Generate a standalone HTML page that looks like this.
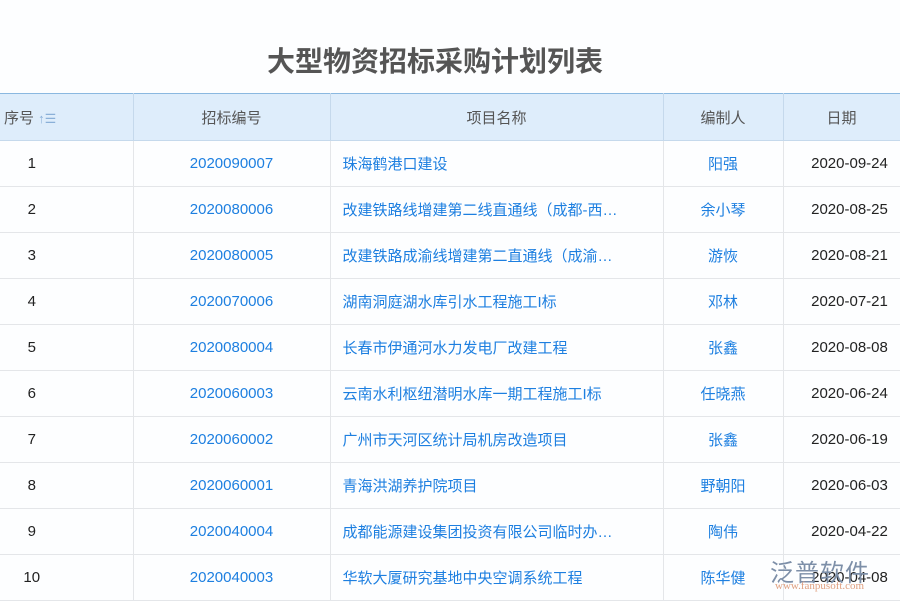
<!DOCTYPE html><html><head><meta charset="utf-8"><style>
body{margin:0;width:900px;height:600px;background:#fdfeff;font-family:"Liberation Sans","Noto Sans CJK SC",sans-serif;overflow:hidden;position:relative}
h1{position:absolute;top:42px;left:0;width:870px;text-align:center;margin:0;font-size:28px;color:#555;font-weight:bold;line-height:40px}
table{position:absolute;top:93px;left:0;border-collapse:collapse;width:900px;table-layout:fixed;font-size:15px}
th,td{padding:0;box-sizing:border-box}
th{height:47px;background:#deedfb;color:#555;font-weight:normal;border-top:1px solid #8ab8e0;border-bottom:1px solid #c5d9ec;border-right:1px solid #c5d9ec;text-align:center}
td{height:46px;border-bottom:1px solid #e4e6e9;border-right:1px solid #e4e6e9;text-align:center;color:#1d7fe0;white-space:nowrap;overflow:hidden;text-overflow:ellipsis}
td:first-child{color:#222;padding-right:69px}
td:last-child{color:#222;padding-left:16px}
td.l{text-align:left;padding-left:12px}
th:first-child{text-align:left;padding-left:4px}
.wm{position:absolute;left:770px;top:553px;font-size:24px;color:#7d8fa8;letter-spacing:1px}
.wm2{position:absolute;left:775px;top:580px;font-size:11px;color:#e0a080;font-family:"Liberation Serif",serif}
</style></head><body>
<h1>大型物资招标采购计划列表</h1>
<table>
<colgroup><col style="width:133px"><col style="width:197px"><col style="width:333px"><col style="width:120px"><col style="width:117px"></colgroup>
<tr><th>序号 <span style="color:#8ab0d8;font-size:13px">↑☰</span></th><th>招标编号</th><th>项目名称</th><th>编制人</th><th>日期</th></tr>
<tr><td>1</td><td>2020090007</td><td class="l">珠海鹤港口建设</td><td>阳强</td><td>2020-09-24</td></tr>
<tr><td>2</td><td>2020080006</td><td class="l">改建铁路线增建第二线直通线（成都-西…</td><td>余小琴</td><td>2020-08-25</td></tr>
<tr><td>3</td><td>2020080005</td><td class="l">改建铁路成渝线增建第二直通线（成渝…</td><td>游恢</td><td>2020-08-21</td></tr>
<tr><td>4</td><td>2020070006</td><td class="l">湖南洞庭湖水库引水工程施工I标</td><td>邓林</td><td>2020-07-21</td></tr>
<tr><td>5</td><td>2020080004</td><td class="l">长春市伊通河水力发电厂改建工程</td><td>张鑫</td><td>2020-08-08</td></tr>
<tr><td>6</td><td>2020060003</td><td class="l">云南水利枢纽潜明水库一期工程施工I标</td><td>任晓燕</td><td>2020-06-24</td></tr>
<tr><td>7</td><td>2020060002</td><td class="l">广州市天河区统计局机房改造项目</td><td>张鑫</td><td>2020-06-19</td></tr>
<tr><td>8</td><td>2020060001</td><td class="l">青海洪湖养护院项目</td><td>野朝阳</td><td>2020-06-03</td></tr>
<tr><td>9</td><td>2020040004</td><td class="l">成都能源建设集团投资有限公司临时办…</td><td>陶伟</td><td>2020-04-22</td></tr>
<tr><td>10</td><td>2020040003</td><td class="l">华软大厦研究基地中央空调系统工程</td><td>陈华健</td><td>2020-04-08</td></tr>
</table>
<div class="wm">泛普软件</div>
<div class="wm2">www.fanpusoft.com</div>
</body></html>
